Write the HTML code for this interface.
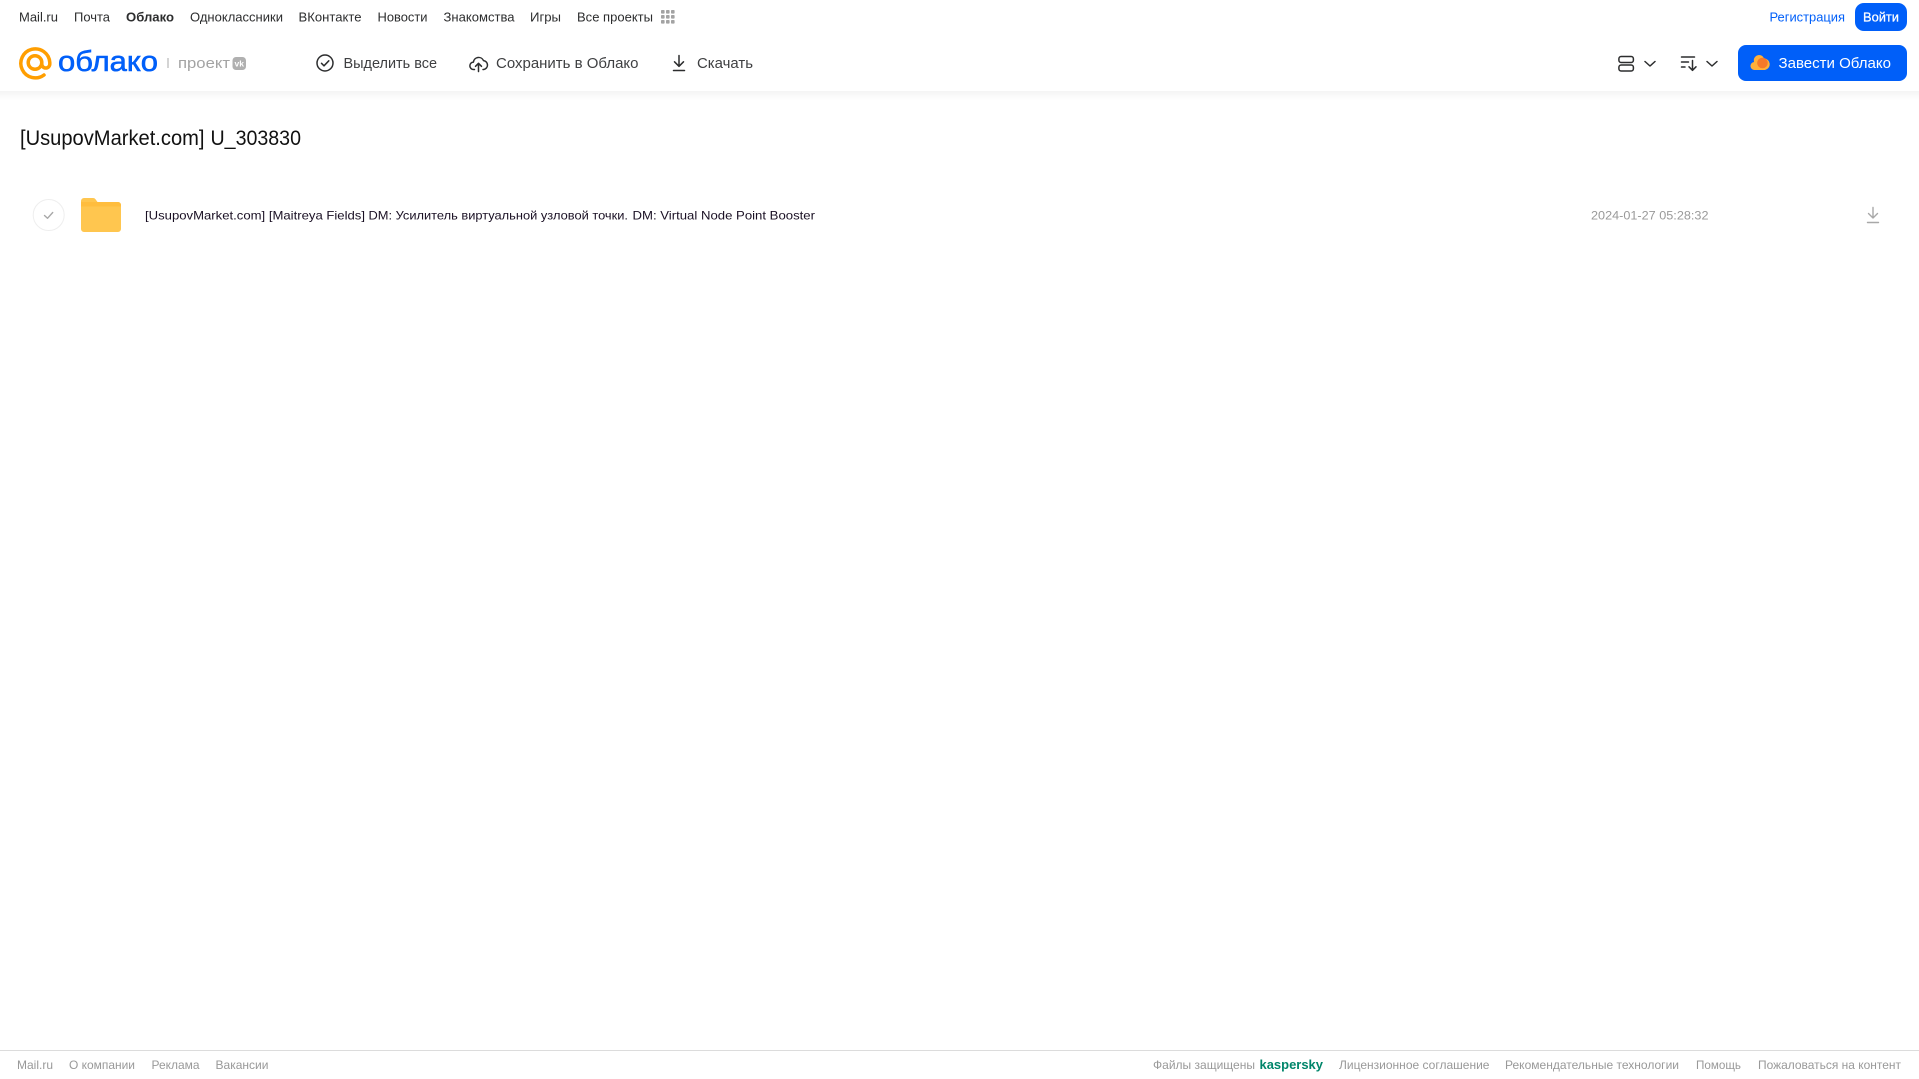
<!DOCTYPE html>
<html lang="ru">
<head>
<meta charset="utf-8">
<title>Облако</title>
<style>
html,body{margin:0;padding:0;background:#fff;width:1919px;height:1079px;overflow:hidden}
svg{display:block;position:absolute;left:0;top:0}
text{font-family:"Liberation Sans",sans-serif}
.n{font-size:13px;fill:#2c2d2e}
.a{font-size:15px;fill:#3f4042}
.f{font-size:12px;fill:#999}
.r{font-size:12px;fill:#1a1024}
.i{fill:none;stroke:#2c2d2e;stroke-width:1.5;stroke-linecap:round;stroke-linejoin:round}
</style>
</head>
<body>
<svg width="1919" height="1079" viewBox="0 0 1919 1079" xmlns="http://www.w3.org/2000/svg">
<defs>
<linearGradient id="s" x1="0" y1="0" x2="0" y2="1"><stop offset="0" stop-color="#f4f4f4"/><stop offset="1" stop-color="#fff"/></linearGradient>
</defs>
<rect width="1919" height="1079" fill="#fff"/>
<rect x="0" y="91" width="1919" height="9" fill="url(#s)"/>

<text class="n" x="19" y="21.5" textLength="39" lengthAdjust="spacingAndGlyphs">Mail.ru</text>
<text class="n" x="74" y="21.5" textLength="36" lengthAdjust="spacingAndGlyphs">Почта</text>
<text class="n" x="126" y="21.5" textLength="48" lengthAdjust="spacingAndGlyphs" font-weight="700">Облако</text>
<text class="n" x="190" y="21.5" textLength="93" lengthAdjust="spacingAndGlyphs">Одноклассники</text>
<text class="n" x="298.500" y="21.5" textLength="63" lengthAdjust="spacingAndGlyphs">ВКонтакте</text>
<text class="n" x="377.500" y="21.5" textLength="50" lengthAdjust="spacingAndGlyphs">Новости</text>
<text class="n" x="443.500" y="21.5" textLength="71" lengthAdjust="spacingAndGlyphs">Знакомства</text>
<text class="n" x="530" y="21.5" textLength="31" lengthAdjust="spacingAndGlyphs">Игры</text>
<text class="n" x="577" y="21.5" textLength="76" lengthAdjust="spacingAndGlyphs">Все проекты</text>
<g fill="#a3a3a3">
<rect x="661" y="10" width="3.6" height="3.6" rx=".8"/><rect x="666" y="10" width="3.6" height="3.6" rx=".8"/><rect x="671" y="10" width="3.6" height="3.6" rx=".8"/>
<rect x="661" y="15" width="3.6" height="3.6" rx=".8"/><rect x="666" y="15" width="3.6" height="3.6" rx=".8"/><rect x="671" y="15" width="3.6" height="3.6" rx=".8"/>
<rect x="661" y="20" width="3.6" height="3.6" rx=".8"/><rect x="666" y="20" width="3.6" height="3.6" rx=".8"/><rect x="671" y="20" width="3.6" height="3.6" rx=".8"/>
</g>

<g fill="none" stroke="#ff9e00" stroke-width="3.500" stroke-linecap="round">
<circle cx="35" cy="62.500" r="6.800"/>
<path d="M44 75A14.500 14.500 0 1 1 49.800 62.500v1.500a4 4 0 0 1-8 0v-1.500"/>
</g>
<text x="58" y="71" font-size="29" fill="#005ff9" stroke="#005ff9" stroke-width=".6" textLength="100" lengthAdjust="spacingAndGlyphs">облако</text>
<rect x="167.500" y="58" width="1" height="10" fill="#aaa"/>
<text x="178" y="68" font-size="15" fill="#a3a3a3" textLength="52" lengthAdjust="spacingAndGlyphs">проект</text>
<rect x="232.500" y="57" width="13.500" height="13" rx="3.500" fill="#b0b0b0"/>
<text x="234.500" y="66.500" font-size="8" font-weight="700" fill="#fff" textLength="9.500" lengthAdjust="spacingAndGlyphs">vk</text>

<circle class="i" cx="325" cy="63" r="8"/>
<path class="i" d="M321.500 63.300l2.500 2.500 4.800-5"/>
<text class="a" x="343.500" y="68" textLength="93.500" lengthAdjust="spacingAndGlyphs">Выделить все</text>

<path class="i" d="M474.500 69.500h-.8a3.700 3.700 0 0 1-.3-7.400a5.300 5.300 0 0 1 10.100-1.500a4.500 4.500 0 0 1 .3 8.900h-.8M478.500 71.500v-8M475.500 66.300l3-3 3 3"/>
<text class="a" x="496" y="68" textLength="142.500" lengthAdjust="spacingAndGlyphs">Сохранить в Облако</text>

<path class="i" d="M679 55.500v10.500M674.500 61.800l4.500 4.500 4.500-4.500M673.500 70.500h11"/>
<text class="a" x="697" y="68" textLength="56" lengthAdjust="spacingAndGlyphs">Скачать</text>

<rect class="i" x="1618.900" y="56.500" width="14.500" height="6" rx="2.200"/>
<rect class="i" x="1618.900" y="65" width="14.500" height="6" rx="2.200"/>
<path class="i" d="M1645 61.500l5 4.500 5-4.500"/>
<path class="i" stroke-width="1.200" d="M1681.500 57h13M1681.500 62h7M1681.500 67h3.500M1692.500 60.500v9.500M1689 66.800l3.500 3.500 3.500-3.500"/>
<path class="i" d="M1707 61.500l5 4.500 5-4.500"/>

<text x="1769.500" y="21.500" font-size="13" fill="#005ff9" textLength="75.500" lengthAdjust="spacingAndGlyphs">Регистрация</text>
<rect x="1855" y="3" width="52" height="28" rx="9" fill="#005ff9"/>
<text x="1863" y="21.500" font-size="13" fill="#fff" stroke="#fff" stroke-width=".25" textLength="36" lengthAdjust="spacingAndGlyphs">Войти</text>

<rect x="1738" y="45" width="169" height="36" rx="8" fill="#005ff9"/>
<path d="M1755 70a4 4 0 0 1-1-8a5.500 5.500 0 0 1 5-7a5.500 5.500 0 0 1 5 3.500a5.800 5.800 0 0 1 1 11.500z" fill="#ffb03a"/>
<circle cx="1762.500" cy="63" r="5.300" fill="#f5792a"/>
<text x="1778.500" y="68" font-size="15" fill="#fff" textLength="112.500" lengthAdjust="spacingAndGlyphs">Завести Облако</text>

<text x="20" y="145" font-size="21" fill="#111" textLength="184.500" lengthAdjust="spacingAndGlyphs">[UsupovMarket.com]</text>
<text x="210.500" y="145" font-size="21" fill="#111" textLength="90.500" lengthAdjust="spacingAndGlyphs">U_303830</text>

<circle cx="48.700" cy="215" r="15.500" fill="#fff" stroke="#eeeeee" stroke-width="1"/>
<path d="M44.500 215.500l3 2.800 5.200-5.800" fill="none" stroke="#a8a8a8" stroke-width="1.400" stroke-linecap="round" stroke-linejoin="round"/>

<path d="M81 201a3 3 0 0 1 3-3h9a3 3 0 0 1 2.500 1.200l2 2.800H118a3 3 0 0 1 3 3v24a3 3 0 0 1-3 3H84a3 3 0 0 1-3-3z" fill="#ffc64f"/>
<path d="M81 206.500h40v-1.500a3 3 0 0 0-3-3H81z" fill="#ffbd3e"/>

<text class="r" x="145" y="219.500" textLength="220" lengthAdjust="spacingAndGlyphs">[UsupovMarket.com] [Maitreya Fields]</text>
<text class="r" x="368.500" y="219.500" textLength="259.500" lengthAdjust="spacingAndGlyphs">DM: Усилитель виртуальной узловой точки.</text>
<text class="r" x="632.500" y="219.500" textLength="182.500" lengthAdjust="spacingAndGlyphs">DM: Virtual Node Point Booster</text>
<text x="1591" y="219.500" font-size="12" fill="#999" textLength="117.500" lengthAdjust="spacingAndGlyphs">2024-01-27 05:28:32</text>
<path d="M1873 207.500v10M1868.500 213.500l4.500 4.500 4.500-4.500M1867.500 222.500h11" fill="none" stroke="#a8a8a8" stroke-width="1.400" stroke-linecap="round" stroke-linejoin="round"/>

<rect x="0" y="1050" width="1919" height="1" fill="#dcdcdc"/>
<text class="f" x="17" y="1069" textLength="36" lengthAdjust="spacingAndGlyphs">Mail.ru</text>
<text class="f" x="69" y="1069" textLength="66" lengthAdjust="spacingAndGlyphs">О компании</text>
<text class="f" x="151.500" y="1069" textLength="48" lengthAdjust="spacingAndGlyphs">Реклама</text>
<text class="f" x="215.500" y="1069" textLength="53" lengthAdjust="spacingAndGlyphs">Вакансии</text>
<text class="f" x="1153" y="1069" textLength="102" lengthAdjust="spacingAndGlyphs">Файлы защищены</text>
<text x="1259.500" y="1069" font-size="13" font-weight="700" fill="#00856a" textLength="63.500" lengthAdjust="spacingAndGlyphs">kaspersky</text>
<text class="f" x="1339" y="1069" textLength="150.500" lengthAdjust="spacingAndGlyphs">Лицензионное соглашение</text>
<text class="f" x="1505" y="1069" textLength="174" lengthAdjust="spacingAndGlyphs">Рекомендательные технологии</text>
<text class="f" x="1696" y="1069" textLength="45" lengthAdjust="spacingAndGlyphs">Помощь</text>
<text class="f" x="1758" y="1069" textLength="143" lengthAdjust="spacingAndGlyphs">Пожаловаться на контент</text>
</svg>
</body>
</html>
